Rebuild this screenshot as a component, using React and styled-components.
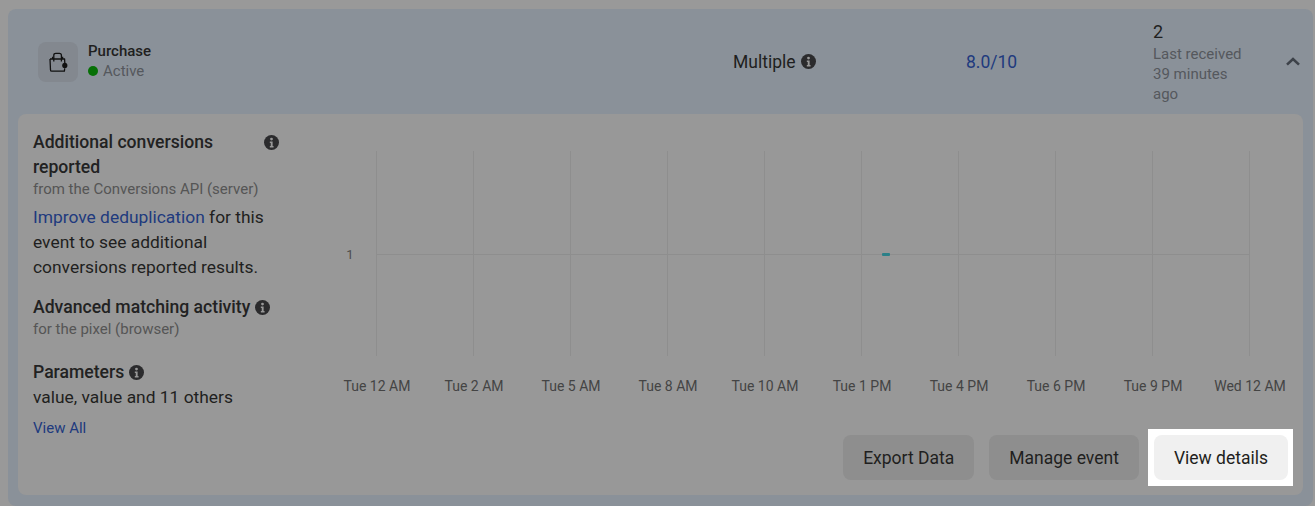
import React from 'react'
import styled, { createGlobalStyle } from 'styled-components'

const hours = ['Tue 12 AM', 'Tue 2 AM', 'Tue 5 AM', 'Tue 8 AM', 'Tue 10 AM', 'Tue 1 PM', 'Tue 4 PM', 'Tue 6 PM', 'Tue 9 PM', 'Wed 12 AM']

const InfoIcon = ({ size = 15 }) => (
    <InfoSvg width={size} height={size} viewBox="0 0 16 16">
        <circle cx="8" cy="8" r="8" fill="#2b2b2d" />
        <circle cx="8" cy="4.3" r="1.5" fill="#989898" />
        <path d="M6.2 6.8h3v5h1v1.6H6.2v-1.6h1v-3.4h-1z" fill="#989898" />
    </InfoSvg>
)

const BagIcon = () => (
    <svg width="20" height="20" viewBox="0 0 20 20" fill="none" stroke="#111" strokeWidth="1.3">
        <path d="M2 7h14.6l.2 4M2 7l.5 11c0 .8.5 1.2 1.3 1.2h12.6l.3-3" strokeLinejoin="round" />
        <path d="M5.8 9.6V3.2c0-1.2.8-1.9 2-1.9h3.6c1.2 0 2 .7 2 1.9v6.4" />
        <path d="M4.6 7V4.8M14.6 7V4.8" />
        <circle cx="16.8" cy="13.4" r="2.6" fill="#111" stroke="none" />
    </svg>
)

const Chart = () => (
    <ChartSvg width="994" height="272" viewBox="0 0 994 272">
        {hours.map((h, i) => (
            <line key={h} x1={82.5 + i * 97} x2={82.5 + i * 97} y1="22" y2="227" stroke="#8e8e8e" />
        ))}
        <line x1="82" x2="955" y1="125.5" y2="125.5" stroke="#8e8e8e" />
        <rect x="588" y="124" width="8" height="3" rx="1" fill="#2b8088" />
        <text x="56" y="130" textAnchor="middle" fontSize="13" fill="#4d4d4d">1</text>
        {hours.map((h, i) => (
            <text key={h} x={83 + i * 97} y="262" textAnchor="middle" fontSize="14" fill="#444">{h}</text>
        ))}
    </ChartSvg>
)

export default function App() {
    return (
        <>
            <GlobalStyle />
            <Card>
                <Header>
                    <EventCell>
                        <EventIcon><BagIcon /></EventIcon>
                        <EventText>
                            <EventName>Purchase</EventName>
                            <EventStatus><StatusDot />Active</EventStatus>
                        </EventText>
                    </EventCell>
                    <HeaderValue>Multiple <InfoIcon /></HeaderValue>
                    <HeaderValue $link>8.0/10</HeaderValue>
                    <Received>
                        <ReceivedCount>2</ReceivedCount>
                        <Muted>Last received 39 minutes ago</Muted>
                    </Received>
                    <Chevron width="14" height="9" viewBox="0 0 14 9" fill="none" stroke="#3d4249" strokeWidth="2.6">
                        <path d="M1 7.6 7 2l6 5.6" />
                    </Chevron>
                </Header>
                <Panel>
                    <Sidebar>
                        <Section>
                            <TitleRow>
                                <Title $narrow>Additional conversions reported</Title>
                                <InfoIcon />
                            </TitleRow>
                            <SmallText>from the Conversions API (server)</SmallText>
                            <Body $spaced><Link>Improve deduplication</Link> for this event to see additional conversions reported results.</Body>
                        </Section>
                        <Section>
                            <Title>Advanced matching activity <InfoIcon /></Title>
                            <SmallText>for the pixel (browser)</SmallText>
                        </Section>
                        <Section $top={7}>
                            <Title>Parameters <InfoIcon /></Title>
                            <Body>value, value and 11 others</Body>
                            <ViewAll>View All</ViewAll>
                        </Section>
                    </Sidebar>
                    <Main>
                        <Chart />
                        <Actions>
                            <Button>Export Data</Button>
                            <Button>Manage event</Button>
                            <Button $highlighted>View details</Button>
                        </Actions>
                    </Main>
                </Panel>
            </Card>
        </>
    )
}

const GlobalStyle = createGlobalStyle`
    html, body {
        margin: 0;
        background: #999999;
        font-family: Roboto, "Liberation Sans", sans-serif;
        color: #1f1f20;
    }
    svg text {
        font-family: Roboto, "Liberation Sans", sans-serif;
    }
`

const Card = styled.div`
    box-sizing: border-box;
    width: 1305px;
    height: 497px;
    margin: 9px 0 0 8px;
    padding: 0 10px 10px;
    background: #8a9199;
    border-radius: 8px;
    overflow: hidden;
`

const Header = styled.div`
    display: grid;
    grid-template-columns: 695px 233px 187px 90px 1fr;
    align-items: center;
    height: 105px;
    padding: 0 3px 0 20px;
`

const EventCell = styled.div`
    display: flex;
    align-items: center;
    gap: 10px;
`

const EventIcon = styled.div`
    display: flex;
    align-items: center;
    justify-content: center;
    width: 40px;
    height: 40px;
    border-radius: 8px;
    background: #83888f;
`

const EventText = styled.div`
    margin-top: -2px;
`

const EventName = styled.div`
    font-size: 15px;
    font-weight: 500;
    line-height: 20px;
`

const EventStatus = styled.div`
    display: flex;
    align-items: center;
    gap: 5px;
    font-size: 15px;
    line-height: 20px;
    color: #55585d;
`

const StatusDot = styled.span`
    width: 10px;
    height: 10px;
    border-radius: 50%;
    background: #067006;
`

const HeaderValue = styled.div`
    display: flex;
    align-items: center;
    gap: 5px;
    font-size: 17.5px;
    color: ${p => (p.$link ? '#203a7e' : '#1f1f20')};
`

const InfoSvg = styled.svg`
    flex-shrink: 0;
    vertical-align: -2px;
`

const Received = styled.div`
    line-height: 20px;
`

const ReceivedCount = styled.div`
    font-size: 18px;
    line-height: 24px;
`

const Muted = styled.div`
    font-size: 15px;
    line-height: 20px;
    color: #55585d;
`

const Chevron = styled.svg`
    justify-self: end;
`

const Panel = styled.div`
    display: grid;
    grid-template-columns: 261px 1fr;
    box-sizing: border-box;
    height: 381px;
    padding: 15px;
    background: #989898;
    border-radius: 8px;
`

const Sidebar = styled.div`
    display: flex;
    flex-direction: column;
    gap: 15px;
    padding: 1px 15px 0 0;
`

const Section = styled.div`
    ${p => p.$top && `margin-top: ${p.$top}px;`}
`

const TitleRow = styled.div`
    display: flex;
    justify-content: space-between;
    align-items: flex-start;

    svg {
        margin-top: 5px;
    }
`

const Title = styled.div`
    font-size: 17.6px;
    font-weight: 500;
    line-height: 25px;
    color: #222;
    ${p => p.$narrow && 'max-width: 200px;'}
`

const SmallText = styled.div`
    font-size: 15px;
    line-height: 18px;
    color: #555;
`

const Body = styled.div`
    font-size: 17.4px;
    line-height: 25px;
    ${p => p.$spaced && 'margin-top: 7px;'}
`

const Link = styled.span`
    color: #203a7e;
`

const ViewAll = styled.div`
    margin-top: 8px;
    font-size: 15px;
    line-height: 20px;
    color: #203a7e;
`

const Main = styled.div`
    display: flex;
    flex-direction: column;
    justify-content: space-between;
`

const ChartSvg = styled.svg`
    display: block;
`

const Actions = styled.div`
    display: flex;
    justify-content: flex-end;
    gap: 15px;
`

const Button = styled.div`
    position: relative;
    z-index: 0;
    padding: 0 20px;
    height: 45px;
    line-height: 47px;
    font-size: 17.5px;
    border-radius: 8px;
    color: #1f1f20;
    background: ${p => (p.$highlighted ? '#f0f0f0' : '#8e8e8e')};

    ${p => p.$highlighted && `
        &::before {
            content: '';
            position: absolute;
            inset: -6px -5px -6px -6px;
            z-index: -1;
            background: #fff;
        }
        &::after {
            content: '';
            position: absolute;
            inset: 0;
            z-index: -1;
            border-radius: 8px;
            background: #f0f0f0;
        }
    `}
`
